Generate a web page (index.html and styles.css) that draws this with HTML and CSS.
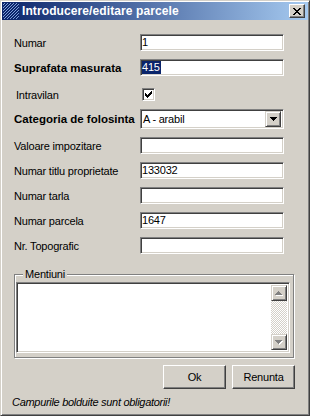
FILE: index.html
```html
<!DOCTYPE html>
<html lang="ro">
<head>
    <meta charset="UTF-8">
    <meta name="viewport" content="width=device-width, initial-scale=1.0">
    <title>Introducere/editare parcele</title>
    <link rel="stylesheet" href="styles.css">
</head>
<body>
<div class="window">
    <div class="titlebar">
        <svg class="app-icon" width="16" height="16" viewBox="0 0 16 16">
            <rect width="16" height="16" fill="#0a246a"/>
            <path d="M-14 16L2 0M-11 16L5 0M-8 16L8 0M-5 16L11 0M-2 16L14 0M1 16L17 0M4 16L20 0M7 16L23 0M10 16L26 0M13 16L29 0" stroke="#7f9fd8" stroke-width="1"/>
        </svg>
        <span class="title">Introducere/editare parcele</span>
        <span class="close-btn">
            <svg width="8" height="7" viewBox="0 0 8 7"><path d="M0 0h2v1h-2zM6 0h2v1h-2zM1 1h2v1h-2zM5 1h2v1h-2zM2 2h4v1h-4zM3 3h2v1h-2zM2 4h4v1h-4zM1 5h2v1h-2zM5 5h2v1h-2zM0 6h2v1h-2zM6 6h2v1h-2z" fill="#000"/></svg>
        </span>
    </div>

    <div class="content">
        <div class="row">
            <span class="label">Numar</span>
            <span class="field">1</span>
        </div>
        <div class="row">
            <span class="label required">Suprafata masurata</span>
            <span class="field"><span class="selected">415</span></span>
        </div>
        <div class="row row-check">
            <span class="label indent">Intravilan</span>
            <span class="checkbox">
                <svg width="7" height="7" viewBox="0 0 7 7"><path d="M6 0h1v1h-1zM5 1h2v1h-2zM0 2h1v1h-1zM4 2h3v1h-3zM0 3h2v1h-2zM3 3h3v1h-3zM0 4h5v1h-5zM1 5h3v1h-3zM2 6h1v1h-1z" fill="#000"/></svg>
            </span>
        </div>
        <div class="row row-combo">
            <span class="label required">Categoria de folosinta</span>
            <span class="combo">
                <span class="combo-text">A - arabil</span>
                <span class="combo-btn">
                    <svg width="7" height="4" viewBox="0 0 7 4"><path d="M0 0h7v1h-7zM1 1h5v1h-5zM2 2h3v1h-3zM3 3h1v1h-1z" fill="#000"/></svg>
                </span>
            </span>
        </div>
        <div class="row">
            <span class="label">Valoare impozitare</span>
            <span class="field"></span>
        </div>
        <div class="row">
            <span class="label">Numar titlu proprietate</span>
            <span class="field">133032</span>
        </div>
        <div class="row">
            <span class="label">Numar tarla</span>
            <span class="field"></span>
        </div>
        <div class="row">
            <span class="label">Numar parcela</span>
            <span class="field">1647</span>
        </div>
        <div class="row">
            <span class="label">Nr. Topografic</span>
            <span class="field"></span>
        </div>

        <div class="group">
            <span class="group-title">Mentiuni</span>
            <div class="memo">
                <div class="scrollbar">
                    <span class="scroll-btn">
                        <svg width="8" height="5" viewBox="0 0 8 5"><path d="M4 1h1v1h-1zM3 2h3v1h-3zM2 3h5v1h-5zM1 4h7v1h-7z" fill="#fff"/><path d="M3 0h1v1h-1zM2 1h3v1h-3zM1 2h5v1h-5zM0 3h7v1h-7z" fill="#808080"/></svg>
                    </span>
                    <span class="scroll-track"></span>
                    <span class="scroll-btn">
                        <svg width="8" height="5" viewBox="0 0 8 5"><path d="M1 1h7v1h-7zM2 2h5v1h-5zM3 3h3v1h-3zM4 4h1v1h-1z" fill="#fff"/><path d="M0 0h7v1h-7zM1 1h5v1h-5zM2 2h3v1h-3zM3 3h1v1h-1z" fill="#808080"/></svg>
                    </span>
                </div>
            </div>
        </div>

        <div class="actions">
            <span class="button">Ok</span>
            <span class="button">Renunta</span>
        </div>

        <p class="hint">Campurile bolduite sunt obligatorii!</p>
    </div>
</div>
</body>
</html>
```

FILE: styles.css
```css
body {
    margin: 0;
    font-family: "Liberation Sans", Arial, sans-serif;
    font-size: 11px;
    color: #000;
    background: #d4d0c8;
}
.window {
    box-sizing: border-box;
    width: 310px;
    height: 416px;
    padding: 1px;
    background: #d4d0c8;
    border: 1px solid;
    border-color: #d4d0c8 #404040 #404040 #d4d0c8;
    box-shadow: inset 1px 1px 0 #fff, inset -1px -1px 0 #808080;
}
.titlebar {
    display: flex;
    align-items: center;
    height: 18px;
    padding: 0 3px 0 1px;
    background: linear-gradient(to right, #0a246a, #a6caf0);
}
.app-icon {
    display: block;
    flex: none;
}
.title {
    margin-left: 3px;
    color: #fff;
    font-weight: bold;
    font-size: 12px;
    letter-spacing: 0.1px;
}
.close-btn {
    box-sizing: border-box;
    display: flex;
    align-items: center;
    justify-content: center;
    width: 16px;
    height: 14px;
    margin-left: auto;
    background: #d4d0c8;
    border: 1px solid;
    border-color: #fff #404040 #404040 #fff;
    box-shadow: inset -1px -1px 0 #808080;
}
.close-btn svg {
    display: block;
}

.content {
    padding: 10px 0 0 12px;
}
.row {
    display: flex;
    align-items: center;
    height: 25px;
}
.row-check {
    height: 21px;
    padding-top: 4px;
}
.row-combo {
    height: 28px;
}
.label {
    width: 126px;
    flex: none;
    line-height: 13px;
    padding-top: 1px;
    letter-spacing: -0.2px;
    white-space: nowrap;
}
.label.required {
    font-weight: bold;
    font-size: 11.5px;
    letter-spacing: 0;
}
.label.indent {
    padding-left: 2px;
    width: 124px;
}
.field {
    box-sizing: border-box;
    width: 144px;
    height: 17px;
    line-height: 13px;
    background: #fff;
    border: 1px solid;
    border-color: #808080 #fff #fff #808080;
    box-shadow: inset 1px 1px 0 #404040, inset -1px -1px 0 #d4d0c8;
    padding: 1px 2px 1px 1px;
    letter-spacing: -0.2px;
    white-space: nowrap;
    overflow: hidden;
}
.selected {
    display: inline-block;
    background: #0a246a;
    color: #fff;
    padding-right: 1px;
}
.checkbox {
    box-sizing: border-box;
    display: flex;
    align-items: center;
    justify-content: center;
    width: 13px;
    height: 13px;
    margin-left: 2px;
    background: #fff;
    border: 1px solid;
    border-color: #808080 #fff #fff #808080;
    box-shadow: inset 1px 1px 0 #404040, inset -1px -1px 0 #d4d0c8;
}
.checkbox svg {
    display: block;
}
.combo {
    box-sizing: border-box;
    display: flex;
    align-items: center;
    width: 144px;
    height: 20px;
    background: #fff;
    border: 1px solid;
    border-color: #808080 #fff #fff #808080;
    box-shadow: inset 1px 1px 0 #404040, inset -1px -1px 0 #d4d0c8;
    padding: 2px;
}
.combo-text {
    flex: 1;
    line-height: 13px;
    padding-left: 0;
    letter-spacing: -0.2px;
}
.combo-btn,
.scroll-btn {
    box-sizing: border-box;
    display: flex;
    align-items: center;
    justify-content: center;
    background: #d4d0c8;
    border: 1px solid;
    border-color: #d4d0c8 #404040 #404040 #d4d0c8;
    box-shadow: inset 1px 1px 0 #fff, inset -1px -1px 0 #808080;
}
.combo-btn {
    width: 16px;
    height: 16px;
}
.combo-btn svg,
.scroll-btn svg {
    display: block;
}

.group {
    margin-top: 16px;
    width: 280px;
    box-sizing: border-box;
    border: 1px solid #808080;
    box-shadow: 1px 1px 0 #fff, inset 1px 1px 0 #fff;
    padding: 0 3px 4px 1px;
}
.group-title {
    display: block;
    width: max-content;
    margin: -7px 0 0 7px;
    padding: 0 2px;
    line-height: 13px;
    background: #d4d0c8;
    letter-spacing: -0.2px;
}
.memo {
    box-sizing: border-box;
    display: flex;
    justify-content: flex-end;
    height: 71px;
    margin-top: 1px;
    background: #fff;
    border: 1px solid;
    border-color: #808080 #fff #fff #808080;
    box-shadow: inset 1px 1px 0 #404040, inset -1px -1px 0 #d4d0c8;
    padding: 2px 2px 2px 0;
}
.scrollbar {
    display: flex;
    flex-direction: column;
    width: 16px;
}
.scroll-btn {
    height: 16px;
    flex: none;
}
.scroll-track {
    flex: 1;
    background-color: #fff;
    background-image: conic-gradient(#d4d0c8 25%, #fff 0 50%, #d4d0c8 0 75%, #fff 0);
    background-size: 2px 2px;
}

.actions {
    display: flex;
    justify-content: flex-end;
    gap: 6px;
    margin-top: 7px;
    padding-right: 13px;
}
.button {
    box-sizing: border-box;
    display: flex;
    align-items: center;
    justify-content: center;
    width: 63px;
    height: 24px;
    border: 1px solid;
    border-color: #fff #404040 #404040 #fff;
    box-shadow: inset -1px -1px 0 #808080, inset 1px 1px 0 #d4d0c8;
    letter-spacing: -0.2px;
}

.hint {
    margin: 7px 0 0 -2px;
    line-height: 13px;
    font-style: italic;
    letter-spacing: -0.3px;
}
```
